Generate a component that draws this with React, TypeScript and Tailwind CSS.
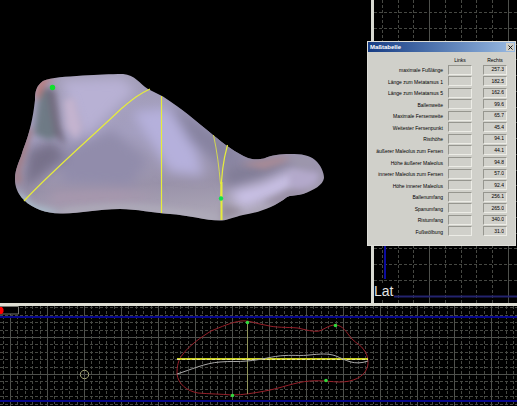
import React from 'react';
import { X } from 'lucide-react';

interface Measurement {
  id: string;
  label: string;
  right: string;
}

const measurements: Measurement[] = [
  { id: 'fusslaenge', label: 'maximale Fußlänge', right: '257.3' },
  { id: 'metatarsus1', label: 'Länge zum Metatarsus 1', right: '182.5' },
  { id: 'metatarsus5', label: 'Länge zum Metatarsus 5', right: '162.6' },
  { id: 'ballenweite', label: 'Ballenweite', right: '99.6' },
  { id: 'fersenweite', label: 'Maximale Fersenweite', right: '65.7' },
  { id: 'fersenpunkt', label: 'Weitester Fersenpunkt', right: '45.4' },
  { id: 'risthoehe', label: 'Risthöhe', right: '94.1' },
  { id: 'aussen-fersen', label: 'äußerer Maleolus zum Fersen', right: '44.1' },
  { id: 'aussen-hoehe', label: 'Höhe äußerer Maleolus', right: '94.8' },
  { id: 'innen-fersen', label: 'innerer Maleolus zum Fersen', right: '57.0' },
  { id: 'innen-hoehe', label: 'Höhe innerer Maleolus', right: '92.4' },
  { id: 'ballenumfang', label: 'Ballenumfang', right: '256.1' },
  { id: 'spanumfang', label: 'Spanumfang', right: '265.0' },
  { id: 'ristumfang', label: 'Ristumfang', right: '340.0' },
  { id: 'fusswoelbung', label: 'Fußwölbung', right: '31.0' },
];

const FOOT =
  'M35 100 C35 92 36 86 43 81 C51 77 66 77 83 75.500 C98 75 110 74 123 74 C135 75 140 84 148 89 L163 96.500 C181 108 196 121 213 135 C224 144 236 153 248 158 C254 160 260 159 264 158.500 C272 155 280 154 290 154 C302 154 309 155 315 160 C321 165 324 173 324 178 C323 185 314 190 303 194 C296 196 290 195 287 197 C273 208 257 213 243 215 C234 217 228 220 222 220.500 C207 221 188 215 170 214 C153 213 137 209 120 209 C96 209 80 214 60 213.500 C46 213 33 209 24 200 C17 193 15 186 15 179 C15 168 20 161 23 150 C30 132 33 118 35 100 Z';

const SOLE =
  'M177 374 C177 366 178 360 183 354 C190 345 200 338 211 331 C221 327 232 322 241 321 C249 320 257 324 265 325 C276 328 287 327 298 328 C306 330 314 332 319 331 C325 329 329 325 335 325 C343 325 346 332 352 339 C357 344 361 345 364 350 C368 355 369 363 367 368 C364 377 353 382 340 382 C332 382 321 380 310 381 C295 382 282 388 265 391 C254 393 243 395 232 395 C221 394 210 394 198 393 C187 391 178 384 177 374 Z';

// A ruled sheet: every fifth line is solid, the others are dashed.
const Grid: React.FC<{
  x: number;
  y: number;
  width: number;
  height: number;
  step: number;
  majorX: number;
  majorY: number;
  solidRows?: boolean;
}> = ({ x, y, width, height, step, majorX, majorY, solidRows = true }) => {
  const lines: React.ReactElement[] = [];
  for (let i = -60; i <= 80; i++) {
    const major = i % 5 === 0;
    const solidRow = major && solidRows;
    const gx = Math.round(majorX + i * step);
    const gy = Math.round(majorY + i * step);
    if (gx >= x && gx < x + width) {
      lines.push(
        <path key={`v${i}`} d={`M${gx + 0.5} ${y}v${height}`} stroke={major ? '#4e504c' : '#464843'} strokeDasharray={major ? undefined : '3 2'} />
      );
    }
    if (gy >= y && gy < y + height) {
      lines.push(
        <path key={`h${i}`} d={`M${x} ${gy + 0.5}h${width}`} stroke={solidRow ? '#4e504c' : '#464843'} strokeDasharray={solidRow ? undefined : '3 2'} />
      );
    }
  }
  return <g fill="none">{lines}</g>;
};

const FootView: React.FC = () => (
  <svg viewBox="0 0 371 303" preserveAspectRatio="xMinYMin meet" className="block h-full w-full" role="img" aria-label="Fuß 3D">
    <defs>
      <linearGradient id="skin" x1="0" y1="0" x2="0.15" y2="1">
        <stop offset="0" stopColor="#a29db5" />
        <stop offset="0.45" stopColor="#a39ebf" />
        <stop offset="0.8" stopColor="#9992a9" />
        <stop offset="1" stopColor="#a9a3b4" />
      </linearGradient>
      <clipPath id="footClip">
        <path d={FOOT} />
      </clipPath>
      <filter id="soft" x="-50%" y="-50%" width="200%" height="200%">
        <feGaussianBlur stdDeviation="6" />
      </filter>
      <filter id="fine" x="-50%" y="-50%" width="200%" height="200%">
        <feGaussianBlur stdDeviation="3" />
      </filter>
    </defs>
    <path d={FOOT} fill="url(#skin)" />
    <g clipPath="url(#footClip)">
      <g filter="url(#soft)">
        <path d="M60 80 L122 78 L136 90 L84 138 Z" fill="#b8b1d4" />
        <path d="M132 112 L168 108 L196 150 L204 176 L170 172 Z" fill="#b5b0dc" />
        <path d="M60 152 L112 130 L148 160 L130 186 L62 182 Z" fill="#918cab" />
        <path d="M28 150 L54 140 L66 158 L24 190 Z" fill="#77718a" />
        <path d="M50 192 L120 190 L160 197 L120 202 L52 204 Z" fill="#a897ad" />
        <path d="M168 101 L216 132 L250 158 L222 166 L190 142 Z" fill="#8783a0" />
        <path d="M222 168 L264 160 L304 160 L266 177 L228 190 Z" fill="#817d97" />
        <path d="M228 192 L262 184 L288 172 L306 176 L284 192 L242 208 Z" fill="#cbc2e8" />
      </g>
      <g filter="url(#fine)">
        <path d="M40 90 L50 87 L53 112 L55 138 L48 140 L34 134 Z" fill="#6e7a85" />
        <path d="M46 88 L55 90 L60 124 L66 146 L55 136 Z" fill="#726a7e" />
        <path d="M64 100 L74 98 L82 128 L76 140 L66 128 Z" fill="#c4b4cf" />
        <path d="M32 130 L28 146 L20 172 L22 182 L14 184 L14 164 L27 126 Z" fill="#a27c84" />
        <path d="M34 98 L39 79 L56 76 L45 84 L39 98 Z" fill="#bc7979" />
        <path d="M17 190 L34 205 L62 212 L40 216 L16 206 Z" fill="#a9bbc9" />
        <path d="M62 212 Q120 203 166 211 L218 218" fill="none" stroke="#b0aebb" strokeWidth="5" />
        <path d="M240 164 Q262 160 286 156 L296 158 L264 169 Z" fill="#aa8b95" />
        <path d="M284 158 L306 157 L316 165 L298 166 Z" fill="#9d97ac" />
        <path d="M290 170 L320 172 L316 184 L300 190 L290 186 Z" fill="#b3a9cb" />
        <path d="M262 203 L288 190 L310 188 L302 197 L280 205 Z" fill="#9a90a6" />
        <path d="M222 204 L244 211 L222 219 Z" fill="#958c9b" />
      </g>
    </g>
    <g fill="none" stroke="#e6ec3c" strokeWidth="1.200">
      <path d="M24 201 C52 171 96 133 122 108 C133 99 139 94 150 89" />
      <path d="M161.500 96v117" />
      <path d="M213.500 135 C217 151 219 167 220.500 184" strokeWidth="0.800" />
      <path d="M227.500 145 C223 161 221 176 221 196" />
      <path d="M221.500 182v38" strokeWidth="2" />
    </g>
    <circle cx="52.500" cy="87.500" r="2.700" fill="#0fe02c" />
    <circle cx="221" cy="198.500" r="2.200" fill="#0fe04c" />
  </svg>
);

const SideView: React.FC = () => (
  <div className="relative h-full overflow-hidden">
    <svg viewBox="374 0 143 303" preserveAspectRatio="xMinYMin slice" className="block h-full w-full" aria-hidden="true">
      <Grid x={374} y={0} width={143} height={303} step={15.75} majorX={429} majorY={264} solidRows={false} />
      <path d="M385 200v79" stroke="#0b0b9e" strokeWidth="2" />
      <path d="M374 296.500h143" stroke="#23236e" strokeWidth="2" />
    </svg>
    <span className="absolute bottom-1 left-0 bg-black pr-px text-sm leading-4 text-[#e4e4e4]">Lat</span>
  </div>
);

const SoleView: React.FC = () => (
  <svg viewBox="0 306 517 100" preserveAspectRatio="xMinYMin slice" className="block h-full w-full" role="img" aria-label="Fußsohle">
    <Grid x={0} y={306} width={517} height={100} step={7.4} majorX={84} majorY={374} />
    <path d="M0 317h517M0 401h517" stroke="#07078c" strokeWidth="2" />
    <path d="M0 306.500h18.500v7.500H0" fill="#000" stroke="#74756f" />
    <path d="M0 307h2l1.500 2v3l-1.500 2H0z" fill="#f00" />
    <circle cx="84.500" cy="374.500" r="4.200" fill="none" stroke="#a3a578" />
    <path d={SOLE} fill="none" stroke="#98202a" />
    <path d="M247.500 322v72" stroke="#92955a" />
    <path d="M177 359h191" stroke="#c9cf22" strokeWidth="2" />
    <path d="M177 359.500h191" stroke="#e4e79a" strokeDasharray="3 2" />
    <path
      d="M177 374 C190 370 205 363 220 362 C230 361 238 362 247 361 C262 360 272 356 285 355.500 C295 355 302 356 309 355 C320 354 328 353 336 356 C346 360 354 366 368 361"
      fill="none"
      stroke="#a9a9a9"
    />
    <g fill="#30d83c">
      <circle cx="247.500" cy="322.500" r="1.800" />
      <circle cx="335.500" cy="325.500" r="1.800" />
      <circle cx="326" cy="380.500" r="1.800" />
      <circle cx="232.500" cy="395.500" r="1.800" />
    </g>
  </svg>
);

const fieldClass =
  'block h-[10px] w-6 border border-t-[#96968f] border-l-[#96968f] border-r-[#ecece6] border-b-[#ecece6] bg-[#d0d0ca] pr-0.5 pb-px text-right text-[5px] leading-none text-black outline-none';

const MeasurementDialog: React.FC = () => (
  <section
    aria-labelledby="dialog-title"
    className="absolute top-[41px] right-px w-[149px] border border-[#deded8] bg-[#d0d0ca] pb-2 text-[5px] leading-none text-black"
  >
    <header className="flex h-[10px] items-center justify-between bg-linear-to-r from-[#173c83] to-[#9abbe2] pr-px pl-0.5">
      <h1 id="dialog-title" className="text-[6px] font-bold text-white">
        Maßtabelle
      </h1>
      <button type="button" aria-label="Schließen" className="flex h-2 w-2 items-center justify-center bg-[#d0d0ca] text-black">
        <X size={7} strokeWidth={3} />
      </button>
    </header>
    <table className="mt-1 h-[181px] w-full border-collapse">
      <thead>
        <tr className="h-2">
          <td />
          <th scope="col" className="w-[35px] p-0 pr-[11px] text-center font-normal">Links</th>
          <th scope="col" className="w-8 p-0 pr-2 text-center font-normal">Rechts</th>
        </tr>
      </thead>
      <tbody>
        {measurements.map((m) => (
          <tr key={m.id}>
            <th scope="row" className="p-0 pt-0.5 pr-[5px] text-right font-normal whitespace-nowrap">
              <label htmlFor={`${m.id}-rechts`}>{m.label}</label>
            </th>
            <td className="p-0">
              <input id={`${m.id}-links`} aria-label={`${m.label} Links`} readOnly defaultValue="" className={fieldClass} />
            </td>
            <td className="p-0">
              <input id={`${m.id}-rechts`} readOnly defaultValue={m.right} className={fieldClass} />
            </td>
          </tr>
        ))}
      </tbody>
    </table>
  </section>
);

const App: React.FC = () => {
  return (
    <main className="relative grid h-screen w-full grid-rows-[minmax(0,303fr)_3px_minmax(0,100fr)] overflow-hidden bg-black font-['Liberation_Sans',sans-serif]">
      <div className="grid min-h-0 grid-cols-[minmax(0,371fr)_3px_minmax(0,143fr)]">
        <FootView />
        <div className="bg-[#d9dad2]" />
        <SideView />
      </div>
      <div className="bg-[#deded4]" />
      <SoleView />
      <MeasurementDialog />
    </main>
  );
};

export default App;
